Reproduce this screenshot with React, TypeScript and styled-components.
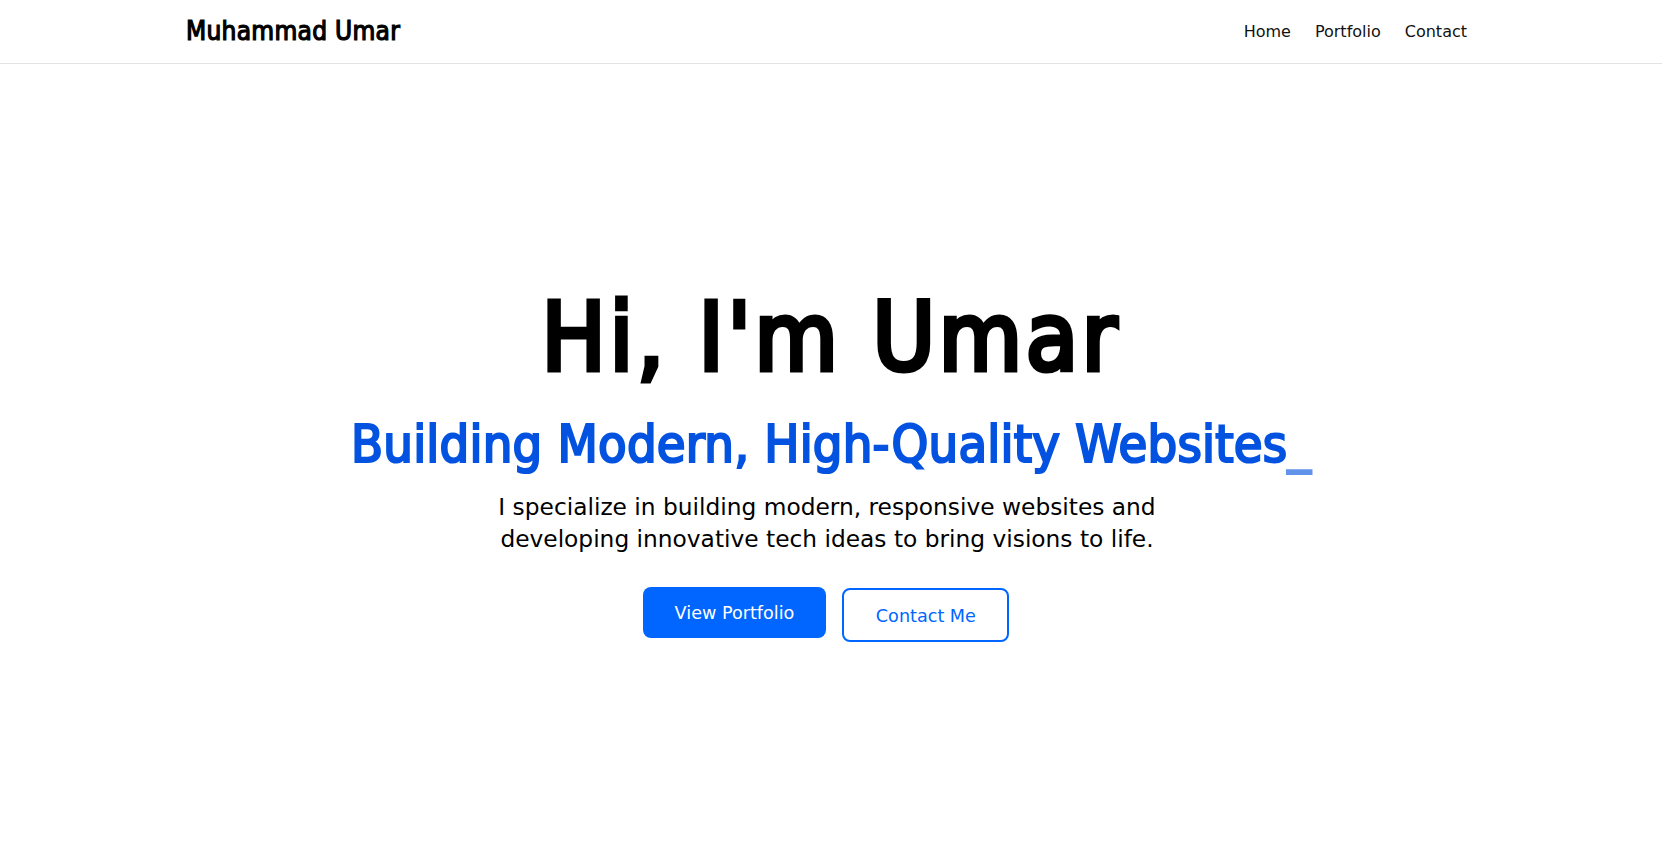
import React from "react";
import styled, { createGlobalStyle } from "styled-components";

const GlobalStyle = createGlobalStyle`
  * { box-sizing: border-box; }
  html, body { margin: 0; padding: 0; background: #ffffff; }
  body {
    font-family: "DejaVu Sans", sans-serif;
    color: #000;
  }
`;

const condensed = `"DejaVu Sans Condensed", "DejaVu Sans", sans-serif`;

const Navbar = styled.header`
  height: 64px;
  border-bottom: 1px solid #e3e3e3;
  background: #fff;
`;

const NavInner = styled.div`
  max-width: 1320px;
  height: 100%;
  margin: 0 auto;
  padding: 0 12px;
  display: flex;
  align-items: center;
  justify-content: space-between;
`;

const Brand = styled.a`
  font-family: ${condensed};
  font-stretch: condensed;
  font-weight: 400;
  -webkit-text-stroke: 1.2px #000;
  letter-spacing: 0.3px;
  font-size: 26px;
  line-height: 1.2;
  color: #000;
  text-decoration: none;
  padding-left: 3px;
`;

const NavLinks = styled.nav`
  display: flex;
  align-items: center;
`;

const NavLink = styled.a`
  font-family: "DejaVu Sans", sans-serif;
  font-size: 16px;
  line-height: 24px;
  color: #111;
  text-decoration: none;
  padding: 0 12px;
`;

const Hero = styled.section`
  min-height: calc(100vh - 64px);
  padding-top: 7px;
  display: flex;
  flex-direction: column;
  align-items: center;
  justify-content: center;
  text-align: center;
`;

const Title = styled.h1`
  margin: 0;
  font-family: ${condensed};
  font-stretch: condensed;
  font-size: 95px;
  font-weight: 400;
  -webkit-text-stroke: 5px #000;
  letter-spacing: 3.7px;
  line-height: 120px;
  color: #000;
`;

const Subtitle = styled.h2`
  margin: 16px 0 0;
  font-family: ${condensed};
  font-stretch: condensed;
  font-size: 52px;
  font-weight: 400;
  -webkit-text-stroke: 2.2px #0352e0;
  letter-spacing: 0.2px;
  line-height: 1.2;
  color: #0352e0;
`;

const Cursor = styled.span`
  opacity: 0.62;
`;

const Lead = styled.p`
  margin: 15px 0 0;
  padding-right: 8px;
  font-family: "DejaVu Sans", sans-serif;
  font-size: 23.3px;
  line-height: 32px;
  color: #000;
  max-width: 708px;
`;

const ButtonRow = styled.div`
  margin-top: 32px;
  display: flex;
  align-items: flex-start;
  gap: 16px;
  padding-right: 10px;
`;

const Button = styled.a<{ $variant: "solid" | "outline" }>`
  display: inline-flex;
  align-items: center;
  justify-content: center;
  padding-top: 2px;
  font-family: "DejaVu Sans", sans-serif;
  font-size: 17.6px;
  line-height: 24px;
  border-radius: 8px;
  text-decoration: none;
  height: ${(p) => (p.$variant === "solid" ? "51px" : "54px")};
  margin-top: ${(p) => (p.$variant === "solid" ? "0" : "1px")};
  padding-left: ${(p) => (p.$variant === "solid" ? "32px" : "31.5px")};
  padding-right: ${(p) => (p.$variant === "solid" ? "32px" : "31.5px")};
  background: ${(p) => (p.$variant === "solid" ? "#0066ff" : "#ffffff")};
  color: ${(p) => (p.$variant === "solid" ? "#ffffff" : "#0066ff")};
  border: ${(p) => (p.$variant === "solid" ? "none" : "2px solid #0066ff")};
`;

export default function App() {
  return (
    <>
      <GlobalStyle />
      <Navbar>
        <NavInner>
          <Brand href="#">Muhammad Umar</Brand>
          <NavLinks>
            <NavLink href="#">Home</NavLink>
            <NavLink href="#">Portfolio</NavLink>
            <NavLink href="#">Contact</NavLink>
          </NavLinks>
        </NavInner>
      </Navbar>
      <Hero>
        <Title>Hi, I'm Umar</Title>
        <Subtitle>
          Building Modern, High-Quality Websites<Cursor>_</Cursor>
        </Subtitle>
        <Lead>
          I specialize in building modern, responsive websites and developing
          innovative tech ideas to bring visions to life.
        </Lead>
        <ButtonRow>
          <Button $variant="solid" href="#">View Portfolio</Button>
          <Button $variant="outline" href="#">Contact Me</Button>
        </ButtonRow>
      </Hero>
    </>
  );
}
